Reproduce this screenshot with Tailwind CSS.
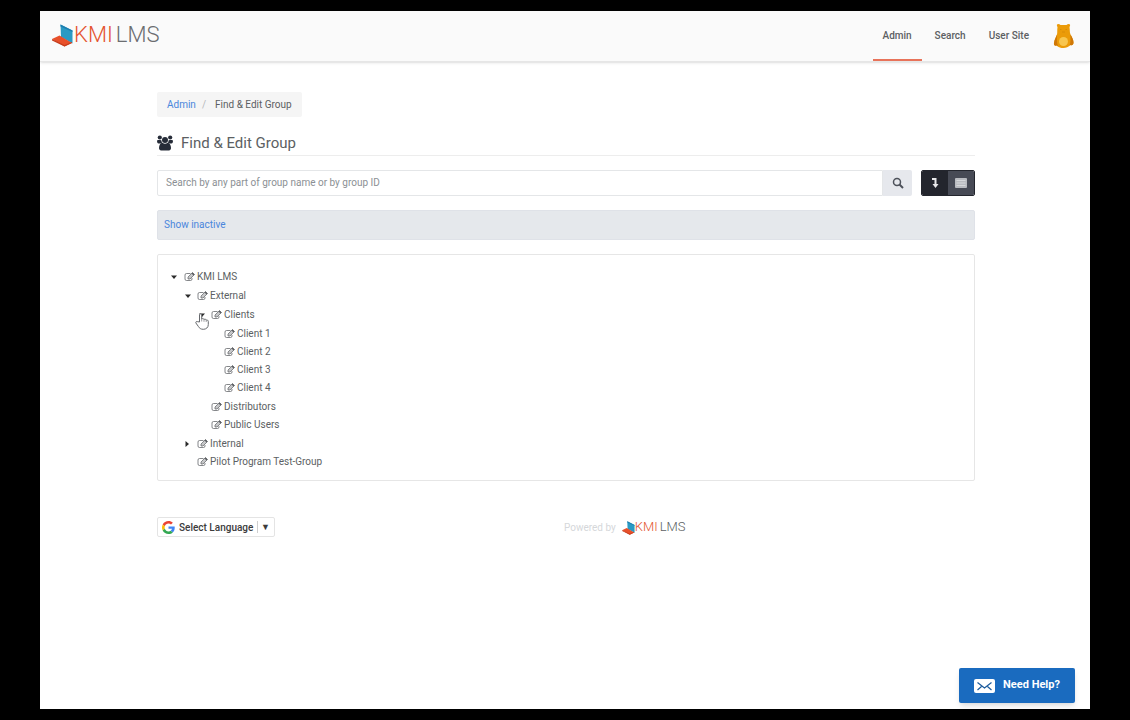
<!DOCTYPE html>
<html lang="en">
<head>
  <meta charset="UTF-8">
  <meta name="viewport" content="width=device-width, initial-scale=1.0">
  <title>Find &amp; Edit Group - KMI LMS</title>
  <script src="https://cdn.jsdelivr.net/npm/@tailwindcss/browser@4"></script>
</head>
<body class="bg-black min-h-screen flex flex-col px-10 py-[11px] font-['Roboto',sans-serif] text-[10px] text-[#5c5f63]">
  <!-- Shared icons -->
  <svg class="hidden">
    <symbol id="edit" viewBox="0 0 22 20">
      <path d="M13 3H5A3 3 0 0 0 2 6V14A3 3 0 0 0 5 17H13A3 3 0 0 0 16 14V12" fill="none" stroke="currentColor" stroke-width="1.500"/>
      <path d="M8 14V10L17 1L21 5L12 14Z" fill="currentColor" fill-opacity="0.350" stroke="currentColor" stroke-width="1.400"/>
      <path d="M15 3L19 7L21 5L17 1Z" fill="currentColor"/>
    </symbol>
    <symbol id="logo" viewBox="0 0 21 23">
      <path d="M8.500 0.500L20.500 6.500V19.500L9 13Z" fill="#2a9ac4"/>
      <path d="M8.500 0.500L20.500 6.500V8L8.500 2.500Z" fill="#1c7fb0"/>
      <path d="M0 15L7.500 11.500L20 19L12.500 22.500Z" fill="#e8502a"/>
      <path d="M0 15L12.500 21L20 18V19L12.500 22.500L0 16.500Z" fill="#c63d1c"/>
    </symbol>
  </svg>

  <div class="flex-1 flex flex-col bg-white">
    <!-- Navigation -->
    <header class="h-[51px] flex justify-between bg-[#fafafa] border-b border-[#e6e6e6] shadow-sm pl-3 pr-4">
      <a href="#" aria-label="KMI LMS" class="flex items-center h-[46px] text-[22px] font-light">
        <svg class="w-[21px] h-[23px] mt-[2px]"><use href="#logo"/></svg>
        <span class="pl-px text-[#e4532f]">KMI</span>
        <span class="pl-[3px] text-[#6b6d70]">LMS</span>
      </a>
      <div class="flex">
        <nav class="flex gap-[3px] font-medium">
          <a href="#" class="flex items-center px-[10px] border-b-2 border-[#e8735a]">Admin</a>
          <a href="#" class="flex items-center px-[10px] border-b-2 border-transparent">Search</a>
          <a href="#" class="flex items-center px-[10px] border-b-2 border-transparent">User Site</a>
        </nav>
        <button class="ml-[14px]" aria-label="Account">
          <svg class="w-[21px] h-[26px]" viewBox="0 0 21 26">
            <path d="M4 1.500C5 0.500 6.500 1 7.500 2H13.500C14.500 1 16 0.500 17 1.500C17.500 2.500 16.500 3.500 16.500 4.500C17 7 16.500 9 17.500 11.500C19 14 20.500 17 20.500 19.500C20.500 22 19 22.500 17.500 22C15.500 24 13 25 10.500 25C8 25 5.500 24.500 3.500 22.500C2 23 0.500 22 1 20C1.500 16.500 3 14 4 11.500C4.500 9 4 7 4.500 4.500C4.500 3.500 3.500 2.500 4 1.500Z" fill="#eb9b09"/>
            <path d="M1 20C1.500 16.500 3 14 4 11.500C4 16 3.500 19 5 23L3.500 22.500C2 23 0.500 22 1 20ZM20.500 19.500C20.500 17 19 14 17.500 11.500C17.500 16 18 19 16.500 22.500L17.500 22C19 22.500 20.500 22 20.500 19.500Z" fill="#cf7708"/>
            <ellipse cx="10.500" cy="18.500" rx="4.500" ry="4.500" fill="#f8c64f"/>
            <path d="M7 6.500H8.500M12.500 6.500H14M9 9H12" stroke="#d98c08" stroke-width="1"/>
          </svg>
        </button>
      </div>
    </header>

    <main class="w-full max-w-[820px] mx-auto pl-[2px] pt-[30px] flex-1">
      <!-- Breadcrumb -->
      <nav aria-label="Breadcrumb" class="flex">
        <ol class="flex items-center h-[25px] px-[10px] rounded-xs bg-[#f5f5f5]">
          <li><a href="#" class="text-[#4a86dc]">Admin</a></li>
          <li class="px-[6px] text-[#b5b8bb]">/</li>
          <li class="pl-[3px]">Find &amp; Edit Group</li>
        </ol>
      </nav>

      <h1 class="flex items-center gap-2 mt-[15px] pb-px border-b border-[#ededed] text-[15px] leading-[22px]">
        <svg class="w-4 h-4 text-[#262c38]" viewBox="0 0 16 16" fill="currentColor">
          <circle cx="2.800" cy="2.500" r="2.100"/>
          <circle cx="13.200" cy="2.500" r="2.100"/>
          <circle cx="8" cy="5" r="3"/>
          <path d="M0 5.500C1.500 4.800 3 5 4.500 5.500C4.500 7 5 8 6 8.500H1.500C0.500 8.500 0 7.500 0 5.500ZM16 5.500C14.500 4.800 13 5 11.500 5.500C11.500 7 11 8 10 8.500H14.500C15.500 8.500 16 7.500 16 5.500Z"/>
          <path d="M2 13C2 10 3.500 8 5.500 7.800C7 9 9 9 10.500 7.800C12.500 8 14 10 14 13C14 14.500 13 15.500 12 15.500H4C3 15.500 2 14.500 2 13Z"/>
        </svg>
        Find &amp; Edit Group
      </h1>

      <!-- Search -->
      <div class="flex gap-[9px] mt-[14px] h-[26px]">
        <form class="flex flex-1">
          <input type="text" aria-label="Search groups" placeholder="Search by any part of group name or by group ID" class="flex-1 min-w-0 px-2 pb-px border border-[#e4e6e8] rounded-l-xs placeholder:text-[#8b8f94]">
          <button type="button" aria-label="Search" class="w-[29px] flex items-center justify-center rounded-r-xs bg-[#e6e8ed] text-[#4d515a]">
            <svg class="w-3 h-3" viewBox="0 0 12 12" fill="none" stroke="currentColor"><circle cx="5" cy="5" r="3.500" stroke-width="1.500"/><path d="M7.500 7.500L11 11" stroke-width="2"/></svg>
          </button>
        </form>
        <div class="flex w-[54px] rounded-xs overflow-hidden border border-[#23252d] text-[#e8e8ea]">
          <button aria-label="Tree view" class="flex-1 flex items-center justify-center bg-[#23252d]">
            <svg class="w-3 h-3" viewBox="0 0 12 12"><path d="M3 2H6.500V8" fill="none" stroke="currentColor" stroke-width="2"/><path d="M3.500 7H9.500L6.500 11Z" fill="currentColor"/></svg>
          </button>
          <button aria-label="List view" class="flex-1 flex items-center justify-center bg-[#474a55]">
            <svg class="w-3 h-3" viewBox="0 0 12 12"><rect y="1" width="12" height="10" rx="1" fill="#b9bbc0"/><path d="M1.500 3.500H10.500M1.500 6H10.500M1.500 8.500H10.500" stroke="#d6d8db" stroke-width="1"/></svg>
          </button>
        </div>
      </div>

      <div class="flex items-center mt-[14px] h-[30px] px-[6px] pb-[2px] rounded-xs border border-[#dfe2e8] bg-[#e5e8ec]">
        <a href="#" class="text-[#4a86dc]">Show inactive</a>
      </div>

      <!-- Group tree -->
      <div class="mt-[14px] border border-[#e6e6e6] rounded-xs pt-[13px] pb-2 pl-[11px] leading-[18px]">
        <ul>
          <li>
            <div class="flex items-center">
              <button aria-label="Collapse KMI LMS" class="w-[15px] h-[18px] pl-[2px]"><svg class="w-[6px] h-[4px]" viewBox="0 0 6 4"><path d="M0 0.500H6L3 4Z" fill="#2b2b2b"/></svg></button>
              <a href="#" class="flex items-center gap-[2px]"><svg class="w-[11px] h-[10px]"><use href="#edit"/></svg>KMI LMS</a>
            </div>
            <ul class="pl-[14px] py-px">
              <li>
                <div class="flex items-center">
                  <button aria-label="Collapse External" class="w-[14px] h-[18px] pl-[2px]"><svg class="w-[6px] h-[4px]" viewBox="0 0 6 4"><path d="M0 0.500H6L3 4Z" fill="#2b2b2b"/></svg></button>
                  <a href="#" class="flex items-center gap-[2px]"><svg class="w-[11px] h-[10px]"><use href="#edit"/></svg>External</a>
                </div>
                <ul class="pl-[14px] py-px">
                  <li>
                    <div class="flex items-center relative">
                      <button aria-label="Collapse Clients" class="w-[14px] h-[18px] pl-[2px]"><svg class="w-[6px] h-[4px]" viewBox="0 0 6 4"><path d="M0 0.500H6L3 4Z" fill="#2b2b2b"/></svg></button>
                      <a href="#" class="flex items-center gap-[2px]"><svg class="w-[11px] h-[10px]"><use href="#edit"/></svg>Clients</a>
                      <!-- Hand pointer -->
                      <svg class="absolute -left-[2px] top-[7px] w-[14px] h-[17px]" viewBox="0 0 14 17">
                        <path d="M4.500 9V2C4.500 0.500 6.700 0.500 6.700 2V6C7.500 5.300 8.800 5.500 9 6.500C9.800 5.900 11 6.200 11.200 7.100C12.200 6.700 13.300 7.300 13.300 8.500V11.500C13.300 14.500 11.200 16.300 8.300 16.300C5.800 16.300 4.500 15.300 3.400 13.500L0.900 10C0.400 8.900 1.600 8 2.700 8.700Z" fill="#fff" stroke="#66696d" stroke-width="1"/>
                        <path d="M6.700 6V8.500M9 6.500V8.800M11.200 7.100V9" stroke="#85878a" stroke-width="0.800"/>
                      </svg>
                    </div>
                    <ul class="pl-[27px] py-px">
                      <li><a href="#" class="flex items-center gap-[2px]"><svg class="w-[11px] h-[10px]"><use href="#edit"/></svg>Client 1</a></li>
                      <li><a href="#" class="flex items-center gap-[2px]"><svg class="w-[11px] h-[10px]"><use href="#edit"/></svg>Client 2</a></li>
                      <li><a href="#" class="flex items-center gap-[2px]"><svg class="w-[11px] h-[10px]"><use href="#edit"/></svg>Client 3</a></li>
                      <li><a href="#" class="flex items-center gap-[2px]"><svg class="w-[11px] h-[10px]"><use href="#edit"/></svg>Client 4</a></li>
                    </ul>
                  </li>
                  <li class="pl-[14px]"><a href="#" class="flex items-center gap-[2px]"><svg class="w-[11px] h-[10px]"><use href="#edit"/></svg>Distributors</a></li>
                  <li class="pl-[14px]"><a href="#" class="flex items-center gap-[2px]"><svg class="w-[11px] h-[10px]"><use href="#edit"/></svg>Public Users</a></li>
                </ul>
              </li>
              <li class="flex items-center">
                <button aria-label="Expand Internal" class="w-[14px] h-[18px] pl-[2px]"><svg class="w-[4px] h-[6px]" viewBox="0 0 4 6"><path d="M0.500 0V6L4 3Z" fill="#2b2b2b"/></svg></button>
                <a href="#" class="flex items-center gap-[2px]"><svg class="w-[11px] h-[10px]"><use href="#edit"/></svg>Internal</a>
              </li>
              <li class="pl-[14px]"><a href="#" class="flex items-center gap-[2px]"><svg class="w-[11px] h-[10px]"><use href="#edit"/></svg>Pilot Program Test-Group</a></li>
            </ul>
          </li>
        </ul>
      </div>

      <!-- Footer -->
      <footer class="flex items-center mt-9 h-5">
        <div class="flex w-[407px]">
          <label for="language" class="flex items-center h-5 px-1 border border-[#e4e4e4] rounded-xs text-[#3c3c3c]">
            <svg class="w-[13px] h-[13px] mr-1" viewBox="0 0 48 48" aria-label="Google">
              <path fill="#EA4335" d="M24 9.500c3.540 0 6.710 1.220 9.210 3.600l6.850-6.850C35.900 2.380 30.470 0 24 0 14.620 0 6.510 5.380 2.560 13.220l7.980 6.190C12.430 13.720 17.740 9.500 24 9.500z"/>
              <path fill="#4285F4" d="M46.980 24.550c0-1.570-.15-3.090-.38-4.550H24v9.020h12.940c-.58 2.960-2.260 5.480-4.780 7.180l7.730 6c4.510-4.180 7.090-10.360 7.090-17.650z"/>
              <path fill="#FBBC05" d="M10.530 28.590A14.500 14.500 0 0 1 9.770 24c0-1.600.27-3.140.76-4.590l-7.980-6.190A24 24 0 0 0 0 24c0 3.880.92 7.540 2.560 10.780l7.970-6.190z"/>
              <path fill="#34A853" d="M24 48c6.480 0 11.930-2.130 15.890-5.810l-7.730-6c-2.150 1.450-4.920 2.300-8.160 2.300-6.260 0-11.570-4.220-13.470-9.910l-7.980 6.190C6.510 42.620 14.620 48 24 48z"/>
            </svg>
            <select id="language" aria-label="Select Language" class="appearance-none font-medium">
              <option>Select Language</option>
            </select>
            <span class="ml-[3px] pl-[3px] border-l border-[#cfcfcf] leading-3 text-[9px]">▼</span>
          </label>
        </div>
        <div class="flex items-center gap-[6px] text-[#d5d7da]">
          Powered by
          <a href="#" aria-label="KMI LMS" class="flex items-center text-[13px] font-light">
            <svg class="w-[13px] h-[14px] mt-px"><use href="#logo"/></svg>
            <span class="text-[#e4532f]">KMI</span>
            <span class="pl-[2px] text-[#5c5f63]">LMS</span>
          </a>
        </div>
      </footer>
    </main>

    <div class="flex justify-end pr-[15px] pb-[6px]">
      <button class="flex items-center justify-center gap-2 w-[116px] h-[35px] rounded-xs bg-[#1a6bbf] text-white text-[11px] font-bold shadow-md">
        <svg class="w-[21px] h-[14px]" viewBox="0 0 21 14"><rect width="21" height="14" rx="2" fill="#fff"/><path d="M3.500 3.500L10.500 9L17.500 3.500M3.500 11L7.500 7.500M17.500 11L13.500 7.500" fill="none" stroke="#1a5a9c" stroke-width="1.200"/></svg>
        Need Help?
      </button>
    </div>
  </div>
</body>
</html>
